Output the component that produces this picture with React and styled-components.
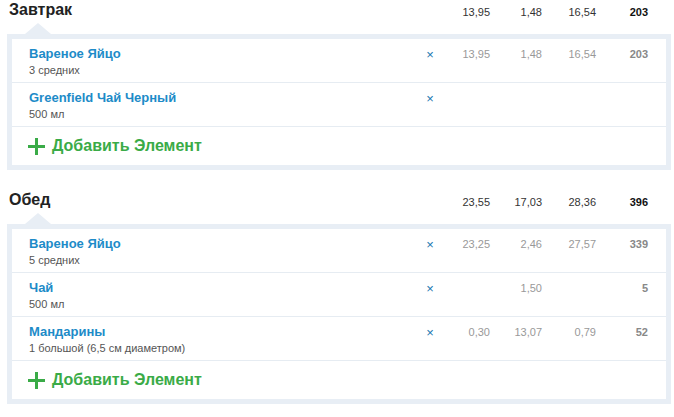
import React from "react";
import styled, { createGlobalStyle } from "styled-components";

const GlobalStyle = createGlobalStyle`
  body {
    margin: 0;
    background: #fff;
    font-family: "Liberation Sans", Arial, sans-serif;
  }
`;

const Page = styled.div`
  width: 674px;
  padding: 0 3px 0 7px;
  box-sizing: border-box;
`;

const Section = styled.div`
  margin-bottom: 20px;
`;

const cols = "1fr 24px 48px 52px 54px 52px";

const Header = styled.div`
  display: grid;
  grid-template-columns: ${cols};
  align-items: center;
  height: 23px;
  padding: 0 23px 0 2px;
  margin-bottom: 11px;
  position: relative;

  &::after {
    content: "";
    position: absolute;
    left: 18px;
    bottom: -11px;
    border-left: 13px solid transparent;
    border-right: 13px solid transparent;
    border-bottom: 11px solid #e8eef5;
  }
`;

const Title = styled.h2`
  margin: 0;
  font-size: 16px;
  font-weight: bold;
  color: #222;
  grid-column: 1 / 3;
  position: relative;
  top: -2px;
`;

const Num = styled.div`
  text-align: right;
  font-size: 11px;
  color: ${(p) => (p.$muted ? "#999" : "#333")};
  font-weight: ${(p) => (p.$bold ? "bold" : "normal")};
  ${(p) => p.$bold && !p.$muted && "color: #111;"}
  ${(p) => p.$bold && p.$muted && "color: #888;"}
`;

const Panel = styled.div`
  border: 5px solid #e8eef5;
  background: #fff;
`;

const Row = styled.div`
  display: grid;
  grid-template-columns: ${cols};
  align-items: start;
  height: 44px;
  box-sizing: border-box;
  padding: 7px 18px 0 17px;
  border-bottom: 1px solid #e6ecf2;
`;

const Name = styled.div`
  display: flex;
  flex-direction: column;
  gap: 3px;
`;

const ItemTitle = styled.a`
  font-size: 13px;
  font-weight: bold;
  color: #1d8bc8;
  text-decoration: none;
  line-height: 15px;
`;

const Portion = styled.span`
  font-size: 11px;
  color: #555;
  line-height: 13px;
`;

const Remove = styled.span`
  font-size: 13px;
  color: #1a78b0;
  text-align: center;
  line-height: 15px;
  padding-top: 1px;
`;

const RowNum = styled(Num)`
  line-height: 15px;
  padding-top: 1px;
`;

const AddRow = styled.div`
  display: flex;
  align-items: center;
  gap: 7px;
  height: 38px;
  padding: 0 0 0 16px;
  font-size: 16px;
  font-weight: bold;
  color: #3aab47;
`;

const meals = [
  {
    title: "Завтрак",
    totals: ["13,95", "1,48", "16,54", "203"],
    items: [
      { name: "Вареное Яйцо", portion: "3 средних", v: ["13,95", "1,48", "16,54", "203"] },
      { name: "Greenfield Чай Черный", portion: "500 мл", v: ["", "", "", ""] },
    ],
  },
  {
    title: "Обед",
    totals: ["23,55", "17,03", "28,36", "396"],
    items: [
      { name: "Вареное Яйцо", portion: "5 средних", v: ["23,25", "2,46", "27,57", "339"] },
      { name: "Чай", portion: "500 мл", v: ["", "1,50", "", "5"] },
      { name: "Мандарины", portion: "1 большой (6,5 см диаметром)", v: ["0,30", "13,07", "0,79", "52"] },
    ],
  },
];

function Plus() {
  return (
    <svg width="17" height="17" viewBox="0 0 17 17">
      <rect x="7" y="0" width="3" height="17" fill="#3aab47" />
      <rect x="0" y="7" width="17" height="3" fill="#3aab47" />
    </svg>
  );
}

export default function App() {
  return (
    <Page>
      <GlobalStyle />
      {meals.map((meal) => (
        <Section key={meal.title}>
          <Header>
            <Title>{meal.title}</Title>
            {meal.totals.map((t, i) => (
              <Num key={i} $bold={i === 3}>{t}</Num>
            ))}
          </Header>
          <Panel>
            {meal.items.map((item, idx) => (
              <Row key={idx}>
                <Name>
                  <ItemTitle href="#">{item.name}</ItemTitle>
                  <Portion>{item.portion}</Portion>
                </Name>
                <Remove>×</Remove>
                {item.v.map((n, i) => (
                  <RowNum key={i} $muted $bold={i === 3}>{n}</RowNum>
                ))}
              </Row>
            ))}
            <AddRow>
              <Plus />
              Добавить Элемент
            </AddRow>
          </Panel>
        </Section>
      ))}
    </Page>
  );
}
